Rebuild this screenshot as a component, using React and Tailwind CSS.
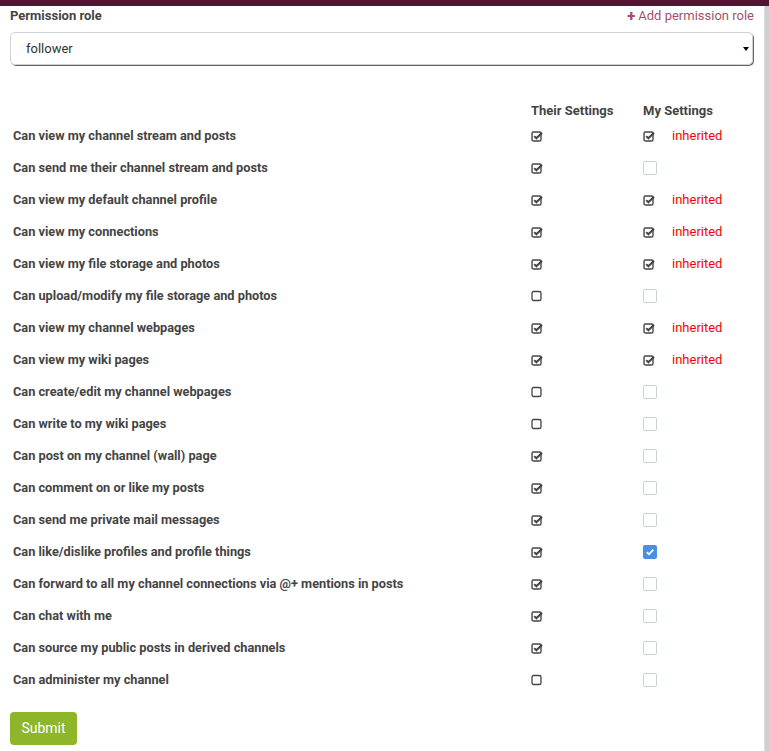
import React from 'react';

const perms = [
  ['Can view my channel stream and posts', 'c', 'c', true],
  ['Can send me their channel stream and posts', 'c', 'u', false],
  ['Can view my default channel profile', 'c', 'c', true],
  ['Can view my connections', 'c', 'c', true],
  ['Can view my file storage and photos', 'c', 'c', true],
  ['Can upload/modify my file storage and photos', 'u', 'u', false],
  ['Can view my channel webpages', 'c', 'c', true],
  ['Can view my wiki pages', 'c', 'c', true],
  ['Can create/edit my channel webpages', 'u', 'u', false],
  ['Can write to my wiki pages', 'u', 'u', false],
  ['Can post on my channel (wall) page', 'c', 'u', false],
  ['Can comment on or like my posts', 'c', 'u', false],
  ['Can send me private mail messages', 'c', 'u', false],
  ['Can like/dislike profiles and profile things', 'c', 'b', false],
  ['Can forward to all my channel connections via @+ mentions in posts', 'c', 'u', false],
  ['Can chat with me', 'c', 'u', false],
  ['Can source my public posts in derived channels', 'c', 'u', false],
  ['Can administer my channel', 'u', 'u', false],
];

// font-awesome style check-square-o
const CheckSquare = () => (
  <svg width="13" height="13" viewBox="0 0 13 13" className="block">
    <rect x="1" y="2" width="9" height="9" rx="1.6" fill="none" stroke="#444" strokeWidth="1.4" />
    <path d="M3.2 6.1 L5.4 8.3 L11 2.7" fill="none" stroke="#444" strokeWidth="2" />
  </svg>
);

const Square = () => (
  <svg width="13" height="13" viewBox="0 0 13 13" className="block">
    <rect x="1" y="1.5" width="9" height="9" rx="1.6" fill="none" stroke="#444" strokeWidth="1.3" />
  </svg>
);

const NativeBox = ({ checked }) =>
  checked ? (
    <div className="w-[14px] h-[14px] rounded-[2px] bg-[#4a90e2] flex items-center justify-center">
      <svg width="10" height="10" viewBox="0 0 10 10">
        <path d="M1.8 5.2 L4 7.3 L8.3 2.6" fill="none" stroke="#fff" strokeWidth="1.8" />
      </svg>
    </div>
  ) : (
    <div className="w-[14px] h-[14px] rounded-[2px] border border-[#c9cfdc] bg-white" />
  );

const App = () => {
  return (
    <div className="w-[769px] h-[751px] overflow-hidden flex flex-col bg-[#d2d2d2] font-['Roboto',sans-serif]">
      <div className="h-[6px] bg-[#4e1630] shrink-0" />
      <div className="flex flex-1">
        <div className="flex-1 bg-white pl-[10px] pr-[11px] pt-[1px]">
          {/* Role selector */}
          <div className="h-[18px] flex justify-between items-center">
            <span className="text-[13px] font-bold text-[#444]">Permission role</span>
            <a className="text-[13px] text-[#a3506f] flex items-center gap-[3px] mr-[-1px]">
              <span className="font-black text-[15px] leading-none">+</span>Add permission role
            </a>
          </div>
          <div className="mt-[7px] h-[33px] rounded-[5px] border border-[#cdd2d8] shadow-[1px_1px_0_#666] flex items-center justify-between pl-[15px] pr-[3px]">
            <span className="text-[13px] text-[#333]">follower</span>
            <span className="w-0 h-0 border-l-[3px] border-r-[3px] border-t-[4px] border-l-transparent border-r-transparent border-t-black" />
          </div>

          {/* Permissions table */}
          <div className="mt-[36px]">
            <div className="h-[19px] flex items-center">
              <div className="w-[521px]" />
              <div className="w-[112px] text-[13px] font-bold text-[#444]">Their Settings</div>
              <div className="text-[13px] font-bold text-[#444]">My Settings</div>
            </div>
            {perms.map(([label, theirs, mine, inherited]) => (
              <div key={label} className="h-[32px] flex items-center">
                <div className="w-[521px] pl-[3px] text-[12.75px] font-bold text-[#444]">{label}</div>
                <div className="w-[112px]">{theirs === 'c' ? <CheckSquare /> : <Square />}</div>
                <div className="flex items-center">
                  <div className="w-[14px]">
                    {mine === 'c' ? <CheckSquare /> : <NativeBox checked={mine === 'b'} />}
                  </div>
                  {inherited && <span className="ml-[15px] text-[13px] text-[#ff0000]">inherited</span>}
                </div>
              </div>
            ))}
          </div>

          <button className="mt-[16px] h-[33px] w-[67px] rounded-[4px] bg-[#8db62a] text-white text-[14px]">
            Submit
          </button>
        </div>
        <div className="w-[5px] bg-[#cfcfcf] border-l border-[#dedede]" />
      </div>
    </div>
  );
};

export default App;
